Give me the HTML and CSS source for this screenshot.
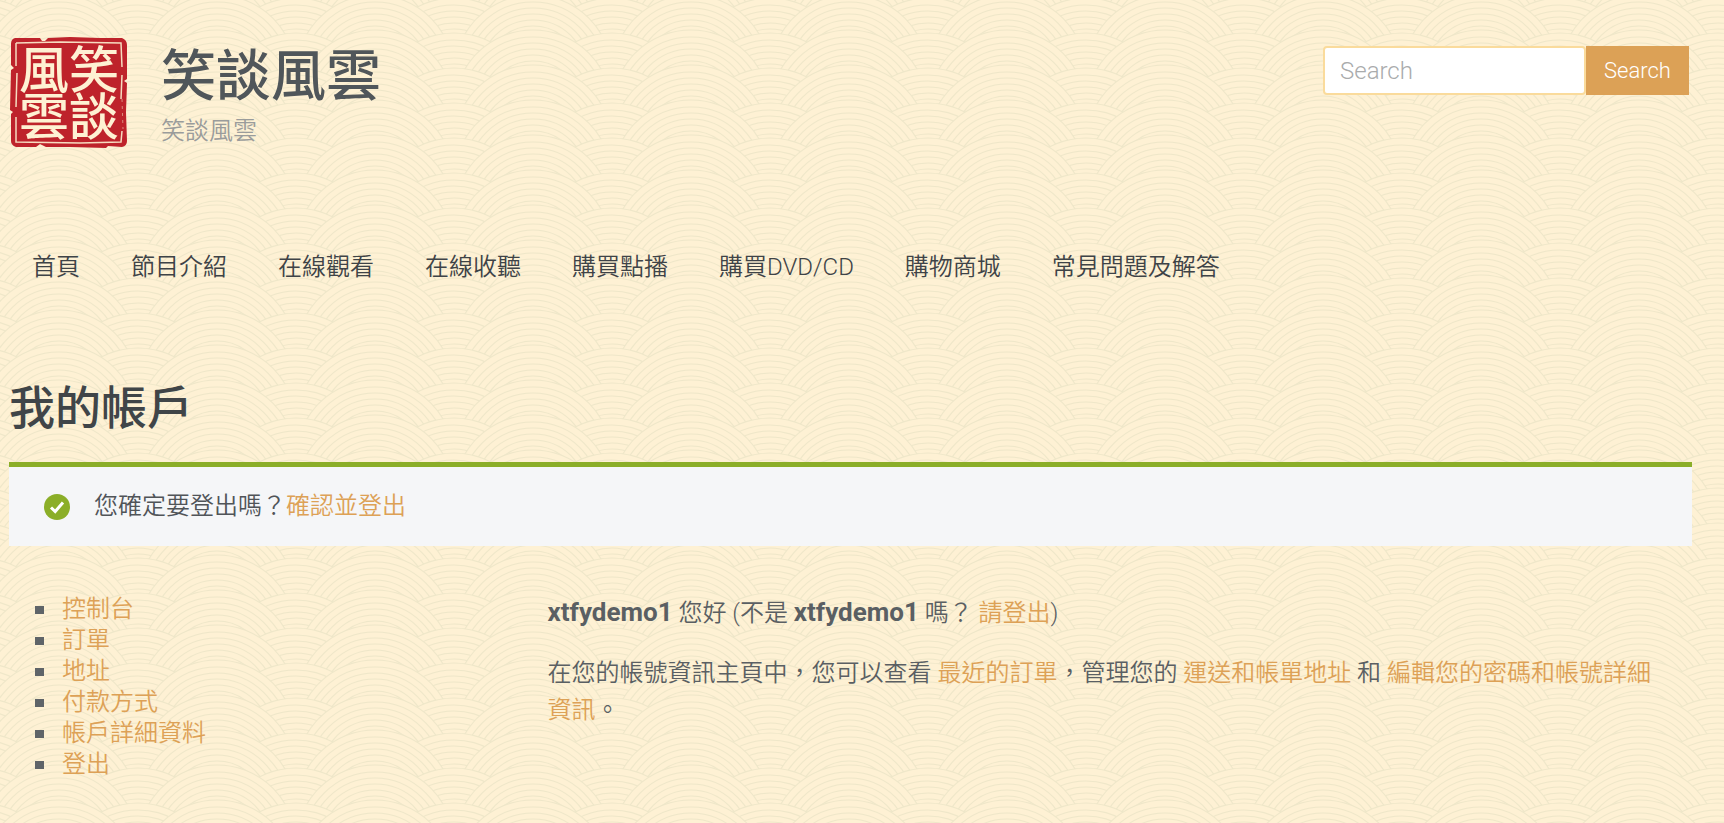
FILE: index.html
```html
<!DOCTYPE html>
<html lang="zh-Hant">
<head>
<meta charset="UTF-8" />
<meta name="viewport" content="width=device-width, initial-scale=1" />
<title>我的帳戶 - 笑談風雲</title>
<link rel="stylesheet" href="styles.css">
</head>
<body>

<header class="site-header">
  <div class="branding">
    <svg class="logo" viewBox="0 0 118 112" role="img" aria-label="笑談風雲">
      <path class="seal" d="M5 1 L30 1 L32 4 L35 4 L38 1 L60 0 L90 1 L112 1 Q117 3 117 8 L117 42 L114 44 L117 46 L116 75 L117 104 Q117 109 112 110 L98 109 L96 111 L60 110 L36 110 L30 107 L26 110 L6 110 Q1 108 1 104 L1 77 L3 75 L0 73 L1 33 L4 31 L1 28 L1 7 Q1 2 5 1 Z"/>
      <path class="seal-line" d="M6 6 L50 5 L111 6 L112 30 M112 38 L111 62 M112 94 L111 105 L70 106 L6 105 L6 80 M6 70 L7 36 M6 29 L6 6"/>
      <path class="seal-speck" d="M112 62 L113 92"/>
      <text class="seal-text" x="9" y="51">風</text>
      <text class="seal-text" x="9" y="98">雲</text>
      <text class="seal-text" x="59" y="51">笑</text>
      <text class="seal-text" x="59" y="98">談</text>
    </svg>
    <div class="titles">
      <p class="site-title">笑談風雲</p>
      <p class="site-desc">笑談風雲</p>
    </div>
  </div>
  <form class="search">
    <input class="search-field" type="search" placeholder="Search" aria-label="Search">
    <button class="search-btn" type="submit">Search</button>
  </form>
</header>

<nav class="main-nav">
  <a href="#">首頁</a>
  <a href="#">節目介紹</a>
  <a href="#">在線觀看</a>
  <a href="#">在線收聽</a>
  <a href="#">購買點播</a>
  <a href="#">購買DVD/CD</a>
  <a href="#">購物商城</a>
  <a href="#">常見問題及解答</a>
</nav>

<main>
  <h1 class="page-title">我的帳戶</h1>

  <div class="notice">
    <svg class="notice-icon" viewBox="0 0 26 26" aria-hidden="true">
      <circle cx="13" cy="13" r="13"/>
      <path d="M7 13.5 L11.2 17.5 L19 8.5"/>
    </svg>
    <p>您確定要登出嗎？<a href="#">確認並登出</a></p>
  </div>

  <div class="account">
    <ul class="account-nav">
      <li><a href="#">控制台</a></li>
      <li><a href="#">訂單</a></li>
      <li><a href="#">地址</a></li>
      <li><a href="#">付款方式</a></li>
      <li><a href="#">帳戶詳細資料</a></li>
      <li><a href="#">登出</a></li>
    </ul>
    <div class="account-content">
      <p><strong>xtfydemo1</strong> 您好 (不是 <strong>xtfydemo1</strong> 嗎？ <a href="#">請登出</a>)</p>
      <p>在您的帳號資訊主頁中，您可以查看 <a href="#">最近的訂單</a>，管理您的 <a href="#">運送和帳單地址</a> 和 <a href="#">編輯您的密碼和帳號詳細資訊</a>。</p>
    </div>
  </div>
</main>

</body>
</html>
```
FILE: styles.css
```css
* {
  box-sizing: border-box;
}
body {
  margin: 0;
  padding: 37px 32px 37px 9px;
  font-family: Roboto, "Noto Sans CJK TC", sans-serif;
  font-size: 24px;
  font-weight: 350;
  line-height: 37px;
  color: #5a5f63;
  background-color: #fef1d4;
  /* overlapping wave scales, one 158x35 tile */
  background-image: url("data:image/svg+xml,%3Csvg xmlns='http://www.w3.org/2000/svg' xmlns:xlink='http://www.w3.org/1999/xlink' width='158' height='35'%3E%3Cdefs%3E%3Cg id='s' fill='%23fef1d4' stroke='%23efe7c9' stroke-width='1.1'%3E%3Ccircle r='79'/%3E%3Ccircle r='72'/%3E%3Ccircle r='66'/%3E%3Ccircle r='60'/%3E%3Ccircle r='54'/%3E%3Ccircle r='48'/%3E%3Ccircle r='42'/%3E%3C/g%3E%3Cg id='r'%3E%3Cuse xlink:href='%23s' x='-20' y='82'/%3E%3Cuse xlink:href='%23s' x='138' y='82'/%3E%3Cuse xlink:href='%23s' x='59' y='79'/%3E%3Cuse xlink:href='%23s' x='217' y='79'/%3E%3Cuse xlink:href='%23s' x='-99' y='79'/%3E%3C/g%3E%3C/defs%3E%3Cuse xlink:href='%23r' y='-75'/%3E%3Cuse xlink:href='%23r' y='-40'/%3E%3Cuse xlink:href='%23r' y='-5'/%3E%3Cuse xlink:href='%23r' y='30'/%3E%3C/svg%3E");
}
p {
  margin: 0;
}
a {
  color: #dda156;
  text-decoration: none;
}
strong {
  font-size: 26px;
  font-weight: 700;
}

/* header */
.site-header {
  display: flex;
  justify-content: space-between;
  align-items: flex-start;
}
.branding {
  display: flex;
  gap: 32px;
}
.logo {
  width: 120px;
  height: 112px;
  overflow: visible;
}
.seal {
  fill: #be232b;
}
.seal-line {
  fill: none;
  stroke: #f6dcc0;
  stroke-width: 1.5;
}
.seal-speck {
  stroke: #dc8a7c;
  stroke-width: 1;
  stroke-dasharray: 3 4;
}
.seal-text {
  font-family: "Noto Sans CJK TC", sans-serif;
  font-size: 50px;
  font-weight: 500;
  fill: #fef1d3;
}
.titles {
  padding-top: 2px;
}
.site-title {
  font-size: 55px;
  font-weight: 500;
  line-height: 74px;
  color: #50565a;
}
.site-desc {
  color: #9a9c9b;
}
.search {
  display: flex;
  margin: 9px 3px 0 0;
}
.search-field {
  width: 263px;
  height: 49px;
  padding: 0 15px;
  font: inherit;
  color: #5a5f63;
  background: #fff;
  border: 2px solid #fadb9c;
  border-radius: 4px;
}
.search-field::placeholder {
  color: #a9abac;
}
.search-btn {
  width: 103px;
  height: 49px;
  padding: 0;
  font: inherit;
  font-size: 22px;
  color: #fff;
  background: #dca156;
  border: 0;
}

/* navigation */
.main-nav {
  display: flex;
  flex-wrap: wrap;
  gap: 51px;
  margin-top: 99px;
  padding: 0 23px;
}
.main-nav a {
  color: #3e4347;
}

/* account page */
.page-title {
  margin: 90px 0 22px;
  font-size: 46px;
  font-weight: 500;
  line-height: 64px;
  color: #404548;
}
.notice {
  display: flex;
  align-items: center;
  gap: 24px;
  padding: 21px 35px;
  color: #505458;
  background: #f5f6f8;
  border-top: 5px solid #8bae28;
}
.notice-icon {
  width: 26px;
  height: 26px;
}
.notice-icon circle {
  fill: #8bae28;
}
.notice-icon path {
  fill: none;
  stroke: #fff;
  stroke-width: 3;
}
.account {
  display: grid;
  grid-template-columns: 32% 1fr;
  margin-top: 48px;
}
.account-nav {
  margin: 0;
  padding-left: 26px;
  line-height: 31px;
  list-style: none;
}
.account-nav li {
  display: flex;
  align-items: center;
  gap: 18px;
}
.account-nav li::before {
  content: "";
  width: 9px;
  height: 8px;
  background: #5f6468;
}
.account-content {
  padding-right: 24px;
}
.account-content p {
  margin-bottom: 23px;
}
```
